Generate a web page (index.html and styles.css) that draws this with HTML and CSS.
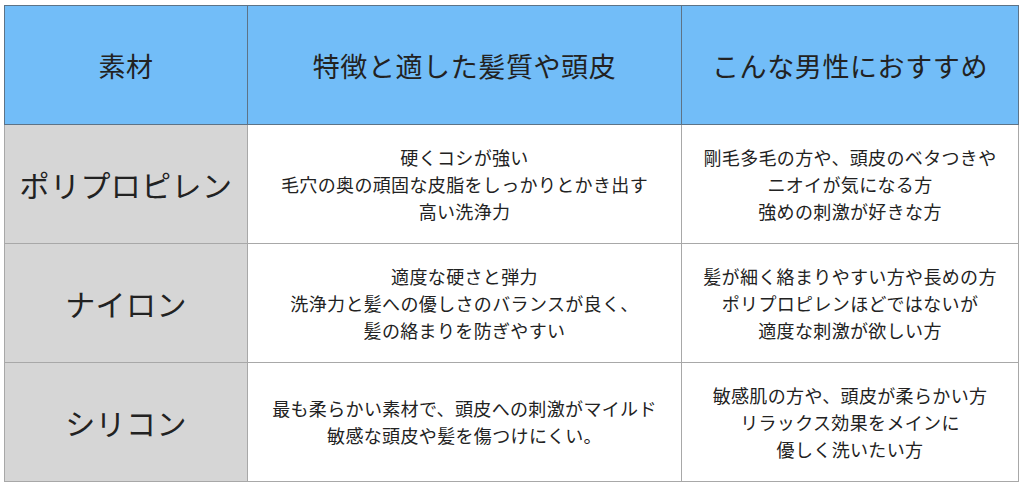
FILE: index.html
```html
<!DOCTYPE html>
<html lang="ja">
<head>
<meta charset="utf-8">
<link rel="stylesheet" href="styles.css">
</head>
<body>
<table class="brush-table">
  <colgroup>
    <col class="c1"><col class="c2"><col class="c3">
  </colgroup>
  <thead>
    <tr>
      <th>素材</th>
      <th>特徴と適した髪質や頭皮</th>
      <th>こんな男性におすすめ</th>
    </tr>
  </thead>
  <tbody>
    <tr>
      <th class="mat">ポリプロピレン</th>
      <td>硬くコシが強い<br>毛穴の奥の頑固な皮脂をしっかりとかき出す<br>高い洗浄力</td>
      <td>剛毛多毛の方や、頭皮のベタつきや<br>ニオイが気になる方<br>強めの刺激が好きな方</td>
    </tr>
    <tr>
      <th class="mat">ナイロン</th>
      <td>適度な硬さと弾力<br>洗浄力と髪への優しさのバランスが良く、<br>髪の絡まりを防ぎやすい</td>
      <td>髪が細く絡まりやすい方や長めの方<br>ポリプロピレンほどではないが<br>適度な刺激が欲しい方</td>
    </tr>
    <tr>
      <th class="mat">シリコン</th>
      <td>最も柔らかい素材で、頭皮への刺激がマイルド<br>敏感な頭皮や髪を傷つけにくい。</td>
      <td>敏感肌の方や、頭皮が柔らかい方<br>リラックス効果をメインに<br>優しく洗いたい方</td>
    </tr>
  </tbody>
</table>
</body>
</html>
```
FILE: styles.css
```css
html, body {
  margin: 0;
  padding: 0;
  background: #ffffff;
}
body {
  padding: 5px 0 0 4px;
  font-family: "Noto Sans CJK JP", "Noto Sans", sans-serif;
  color: #222222;
}
.brush-table {
  border-collapse: collapse;
  table-layout: fixed;
  width: 1014px;
}
.c1 { width: 243px; }
.c2 { width: 434px; }
.c3 { width: 337px; }
.brush-table th,
.brush-table td {
  text-align: center;
  vertical-align: middle;
  padding: 0;
  border: 1px solid #a8a8a8;
}
.brush-table thead th {
  height: 118px;
  background: #72bdf8;
  border: 1px solid #5d7387;
  font-weight: normal;
  font-size: 27px;
  letter-spacing: 0.6px;
}
.brush-table tbody tr {
  height: 119px;
}
.brush-table .mat {
  background: #d6d6d6;
  font-weight: normal;
  font-size: 30px;
  letter-spacing: 0.4px;
}
.brush-table td {
  font-size: 18px;
  letter-spacing: 0.35px;
  line-height: 27px;
  background: #ffffff;
}
```
